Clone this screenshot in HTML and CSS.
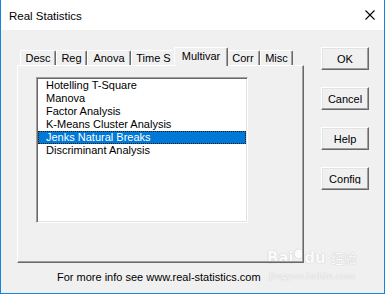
FILE: index.html
```html
<!DOCTYPE html>
<html>
<head>
<meta charset="utf-8">
<link rel="stylesheet" href="styles.css">
</head>
<body>
<div class="window">
  <div class="titlebar">
    <span class="title">Real Statistics</span>
    <svg class="close" width="10" height="10" viewBox="0 0 10 10"><path d="M0.5 0.5L9.5 9.5M9.5 0.5L0.5 9.5" stroke="#000" stroke-width="1.1" fill="none"/></svg>
  </div>
  <div class="client">
    <div class="tabctl">
      <div class="tabs">
        <div class="tab w-desc">Desc</div>
        <div class="tab w-reg">Reg</div>
        <div class="tab w-anova">Anova</div>
        <div class="tab w-time">Time S</div>
        <div class="tab active w-multi">Multivar</div>
        <div class="tab w-corr">Corr</div>
        <div class="tab w-misc">Misc</div>
      </div>
      <div class="panel">
        <div class="listbox">
          <div class="item">Hotelling T-Square</div>
          <div class="item">Manova</div>
          <div class="item">Factor Analysis</div>
          <div class="item">K-Means Cluster Analysis</div>
          <div class="item selected">Jenks Natural Breaks</div>
          <div class="item">Discriminant Analysis</div>
        </div>
      </div>
      <div class="footer">For more info see www.real-statistics.com</div>
    </div>
    <div class="buttons">
      <div class="btn">OK</div>
      <div class="btn">Cancel</div>
      <div class="btn">Help</div>
      <div class="btn"><span class="clip">Config</span></div>
    </div>
  </div>
  <div class="watermark">
    <div class="wm-top">Bai<span class="paw">&#x25CF;</span>du <span class="wm-cn">经验</span></div>
    <div class="wm-url">jingyan.baidu.com</div>
  </div>
</div>
</body>
</html>
```

FILE: styles.css
```css
html, body {
  margin: 0;
  padding: 0;
}
body {
  background: #f0f0f0;
  font-family: "Liberation Sans", Arial, sans-serif;
  font-size: 11px;
  color: #000;
}
.window {
  position: relative;
  width: 385px;
  height: 294px;
  box-sizing: border-box;
  border: 1px solid #1883d7;
  border-top: none;
  background: #f0f0f0;
  overflow: hidden;
}
.titlebar {
  height: 30px;
  background: #fff;
  display: flex;
  align-items: center;
  justify-content: space-between;
  padding: 0 9px 0 8px;
}
.title {
  font-size: 11.5px;
  color: #000;
  margin-top: 1px;
}
.close {
  display: block;
  margin-top: 0px;
}
.client {
  display: flex;
  padding: 17px 0 0 16px;
}
.tabctl {
  width: 287px;
}
.tabs {
  display: flex;
  align-items: flex-end;
  height: 18px;
  padding-left: 3px;
}
.tab {
  height: 15px;
  box-sizing: border-box;
  border-top: 1px solid #fff;
  border-left: 1px solid #fff;
  border-right: 1px solid #696969;
  box-shadow: inset -1px 0 #a0a0a0;
  background: #f0f0f0;
  border-top-left-radius: 2px;
  border-top-right-radius: 2px;
  text-align: center;
  line-height: 13px;
  padding-top: 1px;
  font-size: 11px;
  white-space: nowrap;
}
.tab.active {
  height: 19px;
  margin: 0 -2px -1px -2px;
  position: relative;
  z-index: 2;
  line-height: 14px;
  padding-top: 1px;
}
.w-desc { width: 36px; }
.w-reg { width: 31px; }
.w-anova { width: 44px; }
.w-time { width: 45px; }
.w-multi { width: 54px; }
.w-corr { width: 34px; }
.w-misc { width: 33px; }

.panel {
  height: 198px;
  box-sizing: border-box;
  border-top: 1px solid #fff;
  border-left: 1px solid #fff;
  border-right: 1px solid #696969;
  border-bottom: 1px solid #696969;
  box-shadow: inset -1px -1px #a0a0a0;
  padding: 11px 0 0 18px;
  position: relative;
  z-index: 1;
}
.listbox {
  width: 212px;
  height: 146px;
  box-sizing: border-box;
  background: #fff;
  border: 1px solid;
  border-color: #a0a0a0 #fff #fff #a0a0a0;
  box-shadow: inset 1px 1px #696969, inset -1px -1px #e3e3e3;
  padding: 1px 1px 0 1px;
}
.item {
  height: 13px;
  line-height: 13px;
  padding-left: 8px;
  white-space: nowrap;
}
.item.selected {
  background: #0078d7;
  color: #fff;
  outline: 1px dotted #2a1a00;
  outline-offset: -1px;
}
.footer {
  padding-left: 40px;
  margin-top: 8px;
  line-height: 13px;
  color: #000;
}
.buttons {
  display: flex;
  flex-direction: column;
  gap: 17px;
  margin-left: 17px;
}
.btn {
  width: 48px;
  height: 23px;
  box-sizing: border-box;
  border: 1px solid;
  border-color: #fff #696969 #696969 #fff;
  box-shadow: inset -1px -1px #a0a0a0, inset 1px 1px #e3e3e3;
  background: #f0f0f0;
  display: flex;
  align-items: center;
  justify-content: center;
  font-size: 11px;
}
.clip {
  display: inline-block;
  height: 11px;
  line-height: 12px;
  overflow: hidden;
}
.watermark {
  position: absolute;
  left: 266px;
  top: 238px;
  color: #fbfbfb;
  text-shadow: 0 0 1px #c8c8c8, 0 0 1px #c8c8c8;
  font-family: "DejaVu Sans", "Noto Sans CJK SC", sans-serif;
  pointer-events: none;
}
.wm-top {
  font-size: 15px;
  font-weight: bold;
  line-height: 30px;
  white-space: nowrap;
}
.paw {
  font-size: 12px;
  vertical-align: 6px;
}
.wm-cn {
  font-size: 13px;
  font-weight: normal;
}
.wm-url {
  font-size: 9px;
  margin-top: -3px;
  margin-left: 2px;
  letter-spacing: 0.2px;
}
```
